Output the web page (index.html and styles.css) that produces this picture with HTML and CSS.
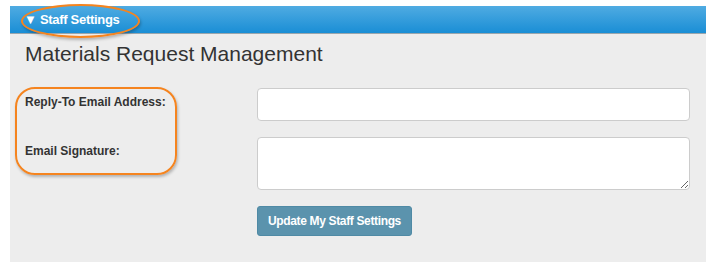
FILE: index.html
```html
<!DOCTYPE html>
<html>
<head>
<meta charset="utf-8">
<title>Staff Settings</title>
<link rel="stylesheet" href="styles.css">
</head>
<body>
<div class="panel">
  <div class="panel-heading">
    <span class="toggle">&#9660; Staff Settings</span>
    <span class="mark mark-title"></span>
  </div>
  <div class="panel-body">
    <h2>Materials Request Management</h2>
    <form class="form">
      <div class="row">
        <label>Reply-To Email Address:</label>
        <input type="text" class="field">
      </div>
      <div class="row">
        <label>Email Signature:</label>
        <textarea class="field area"></textarea>
      </div>
      <div class="row">
        <span class="spacer"></span>
        <button type="button" class="btn">Update My Staff Settings</button>
      </div>
      <span class="mark mark-labels"></span>
    </form>
  </div>
</div>
</body>
</html>
```

FILE: styles.css
```css
body{
  margin:0;
  background:#fff;
  font-family:"Liberation Sans",Arial,sans-serif;
  color:#333;
}
.panel{
  margin:6px 8px 0 10px;
  height:256px;
  background:#ededed;
}
.panel-heading{
  position:relative;
  height:27px;
  background:linear-gradient(#4fabe2,#1a8ed5);
  border-bottom:1px solid #9aa6ad;
  display:flex;
  align-items:center;
  padding-left:14px;
}
.toggle{
  color:#fff;
  font-size:13px;
  font-weight:bold;
  letter-spacing:-0.3px;
}
.mark{
  position:absolute;
  border:2px solid #f5841f;
  box-shadow:1px 2px 3px rgba(0,0,0,0.25);
  pointer-events:none;
}
.mark-title{
  left:11px;
  top:-2px;
  width:115px;
  height:30px;
  border-radius:50%;
}
.panel-body{
  padding:8px 0 0 15px;
}
h2{
  margin:0;
  font-size:21px;
  font-weight:normal;
  color:#333;
  line-height:24px;
}
.form{
  position:relative;
  margin-top:22px;
  padding-right:16px;
}
.row{
  display:flex;
  margin-bottom:16px;
}
label{
  width:232px;
  font-size:12px;
  font-weight:bold;
  color:#333;
  padding-top:7px;
}
.spacer{
  width:232px;
}
.field{
  flex:1;
  height:33px;
  box-sizing:border-box;
  border:1px solid #ccc;
  border-radius:4px;
  background:#fff;
  margin:0;
  font:inherit;
}
.area{
  height:53px;
}
.btn{
  height:30px;
  padding:0 10px;
  background:#5b93ad;
  color:#fff;
  border:1px solid #4f8aa5;
  border-radius:3px;
  font-family:inherit;
  font-size:12px;
  font-weight:bold;
  letter-spacing:-0.35px;
}
.mark-labels{
  left:-10px;
  top:-1px;
  width:158px;
  height:84px;
  border-radius:20px;
}
```
